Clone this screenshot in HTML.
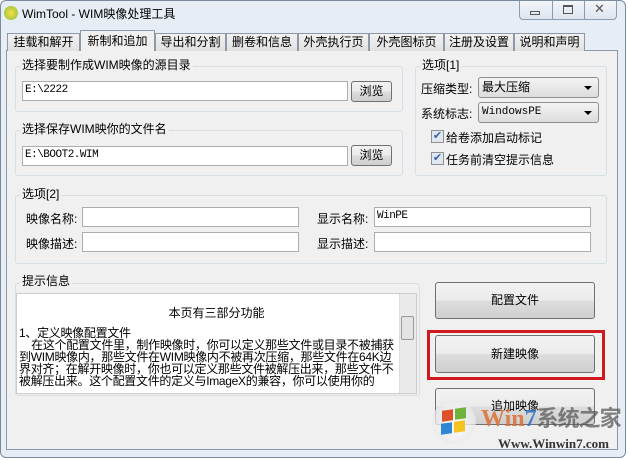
<!DOCTYPE html>
<html><head><meta charset="utf-8"><style>
*{box-sizing:border-box;margin:0;padding:0}
body{width:628px;height:460px;overflow:hidden;background:#fff;font-family:"Liberation Sans","Noto Sans CJK SC",sans-serif;font-size:12px;color:#000;position:relative}
.a{position:absolute}
.win{left:0;top:0;width:626px;height:458px;border:1px solid #7a8a9c;border-radius:6px;background:#e6edf5}
.panel{left:6px;top:50px;width:612px;height:400px;background:#f0f0f0;border:1px solid #8d99a8}
.tab{top:33px;height:18px;border:1px solid #8d99a8;border-bottom:none;background:linear-gradient(#f2f2f2,#e0e0e0);font-size:12px;line-height:16px;text-align:center}
.tab.on{top:30px;height:21px;background:#f0f0f0;line-height:20px;z-index:2}
.grp{border:1px solid #d5dfe5;border-radius:3px}
.lbl{background:#f0f0f0;padding:0 2px;font-size:12px;line-height:14px}
.in{background:#fff;border:1px solid #abadb3;font-family:"Liberation Mono","Noto Sans CJK SC",monospace;font-size:11px;line-height:17px;padding-left:2px;letter-spacing:-0.5px}
.btn{border:1px solid #707070;border-radius:3px;background:linear-gradient(#f2f2f2 0%,#ebebeb 50%,#dddddd 51%,#cfcfcf 100%);text-align:center}
.cb{width:13px;height:13px;border:1px solid #8f8f8f;background:#dfe8f0;font-size:11px;line-height:11px;text-align:center;color:#3a5fa8}
.combo{border:1px solid #8f8f8f;border-radius:3px;background:linear-gradient(#f4f4f4,#dcdcdc);line-height:18px;padding-left:3px}
.combo:after{content:"";position:absolute;right:6px;top:8px;border:4px solid transparent;border-top:4px solid #000}
</style></head><body>
<div class="a win"></div>
<div class="a" style="left:4px;top:6px;width:14px;height:14px;border-radius:50%;background:radial-gradient(#f7e14a,#8bbd3a)"></div>
<div class="a" style="left:22px;top:5px;font-size:12px">WimTool - WIM映像处理工具</div>
<div class="a" style="left:519px;top:1px;width:98px;height:19px;border:1px solid #8b9bb0;border-top:none;border-radius:0 0 4px 4px;background:linear-gradient(#f2f5f9,#dde5ee)"></div>
<div class="a" style="left:552px;top:1px;width:1px;height:18px;background:#8b9bb0"></div>
<div class="a" style="left:584px;top:1px;width:1px;height:18px;background:#8b9bb0"></div>
<div class="a" style="left:530px;top:11px;width:10px;height:4px;border:1px solid #555"></div>
<div class="a" style="left:563px;top:5px;width:10px;height:9px;border:1px solid #555;border-top-width:2px"></div>
<div class="a" style="left:594px;top:1px;font-size:13px;color:#555">✕</div>

<div class="a panel"></div>
<div class="a tab" style="left:7px;width:73px">挂载和解开</div>
<div class="a tab on" style="left:80px;width:75px">新制和追加</div>
<div class="a tab" style="left:155px;width:71px">导出和分割</div>
<div class="a tab" style="left:226px;width:72px">删卷和信息</div>
<div class="a tab" style="left:298px;width:71px">外壳执行页</div>
<div class="a tab" style="left:369px;width:75px">外壳图标页</div>
<div class="a tab" style="left:444px;width:70px">注册及设置</div>
<div class="a tab" style="left:514px;width:71px">说明和声明</div>

<div class="a grp" style="left:15px;top:66px;width:388px;height:46px"></div>
<div class="a lbl" style="left:20px;top:58px">选择要制作成WIM映像的源目录</div>
<div class="a in" style="left:22px;top:81px;width:326px;height:20px">E:\2222</div>
<div class="a btn" style="left:351px;top:81px;width:41px;height:21px;line-height:19px">浏览</div>

<div class="a grp" style="left:15px;top:130px;width:388px;height:46px"></div>
<div class="a lbl" style="left:20px;top:122px">选择保存WIM映你的文件名</div>
<div class="a in" style="left:22px;top:146px;width:326px;height:20px">E:\BOOT2.WIM</div>
<div class="a btn" style="left:351px;top:145px;width:41px;height:21px;line-height:19px">浏览</div>

<div class="a grp" style="left:415px;top:66px;width:192px;height:110px"></div>
<div class="a lbl" style="left:420px;top:58px">选项[1]</div>
<div class="a" style="left:421px;top:80px">压缩类型:</div>
<div class="a combo" style="left:478px;top:77px;width:121px;height:21px">最大压缩</div>
<div class="a" style="left:421px;top:105px">系统标志:</div>
<div class="a combo" style="left:478px;top:102px;width:121px;height:21px;font-family:'Liberation Mono',monospace;font-size:11px">WindowsPE</div>
<div class="a cb" style="left:431px;top:130px">✔</div>
<div class="a" style="left:446px;top:129px">给卷添加启动标记</div>
<div class="a cb" style="left:431px;top:152px">✔</div>
<div class="a" style="left:446px;top:151px">任务前清空提示信息</div>

<div class="a grp" style="left:15px;top:195px;width:592px;height:69px"></div>
<div class="a lbl" style="left:20px;top:187px">选项[2]</div>
<div class="a" style="left:26px;top:210px">映像名称:</div>
<div class="a in" style="left:82px;top:207px;width:217px;height:20px"></div>
<div class="a" style="left:26px;top:235px">映像描述:</div>
<div class="a in" style="left:82px;top:232px;width:217px;height:20px"></div>
<div class="a" style="left:317px;top:210px">显示名称:</div>
<div class="a in" style="left:374px;top:207px;width:217px;height:20px">WinPE</div>
<div class="a" style="left:317px;top:235px">显示描述:</div>
<div class="a in" style="left:374px;top:232px;width:217px;height:20px"></div>

<div class="a grp" style="left:15px;top:283px;width:405px;height:113px"></div>
<div class="a lbl" style="left:20px;top:274px">提示信息</div>
<div class="a" style="left:16px;top:293px;width:401px;height:101px;background:#fff;border:1px solid #ccc;overflow:hidden;font-size:12px;line-height:12px">
<div style="text-align:center;margin-top:11px;line-height:16px">本页有三部分功能</div>
<div style="margin-top:6px;width:380px;padding-left:2px;letter-spacing:-0.3px">1、定义映像配置文件<br>&nbsp;&nbsp;&nbsp;&nbsp;在这个配置文件里，制作映像时，你可以定义那些文件或目录不被捕获到WIM映像内，那些文件在WIM映像内不被再次压缩，那些文件在64K边界对齐；在解开映像时，你也可以定义那些文件被解压出来，那些文件不被解压出来。这个配置文件的定义与ImageX的兼容，你可以使用你的</div>
<div class="a" style="right:0;top:0;width:17px;height:99px;background:#eaeaea;border-left:1px solid #ddd"></div>
<div class="a" style="right:2px;top:22px;width:13px;height:24px;border:1px solid #999;border-radius:2px;background:#e4e4e4"></div>
</div>

<div class="a btn" style="left:435px;top:282px;width:160px;height:37px;line-height:35px">配置文件</div>
<div class="a" style="left:427px;top:330px;width:178px;height:50px;border:3px solid #d0191e"></div>
<div class="a btn" style="left:435px;top:335px;width:160px;height:38px;line-height:36px">新建映像</div>
<div class="a btn" style="left:435px;top:388px;width:160px;height:37px;line-height:35px">追加映像</div>

<div class="a" style="left:432px;top:400px;width:44px;height:44px;border-radius:50%;background:radial-gradient(rgba(255,255,255,.9),rgba(220,220,220,.6))"></div>
<div class="a" style="left:442px;top:410px;width:11px;height:11px;background:#e0512a;transform:skewY(-8deg)"></div>
<div class="a" style="left:455px;top:408px;width:11px;height:11px;background:#6fb33a;transform:skewY(-8deg)"></div>
<div class="a" style="left:441px;top:423px;width:11px;height:11px;background:#2f86d4;transform:skewY(-8deg)"></div>
<div class="a" style="left:454px;top:421px;width:11px;height:11px;background:#f6c322;transform:skewY(-8deg)"></div>
<div class="a" style="left:481px;top:404px;white-space:nowrap;font-family:'Liberation Serif',serif;font-weight:bold;font-size:24px;color:rgba(220,110,50,.85);line-height:26px">Win<span style="color:rgba(40,110,200,.85)">7</span><span style="font-family:'Noto Sans CJK SC',sans-serif;color:rgba(90,90,90,.75);font-size:22px;letter-spacing:-1px">系统之家</span></div>
<div class="a" style="left:498px;top:436px;white-space:nowrap;font-family:'Liberation Serif',serif;font-weight:bold;font-size:13px;color:#333">Www.Winwin7.com</div>
</body></html>
